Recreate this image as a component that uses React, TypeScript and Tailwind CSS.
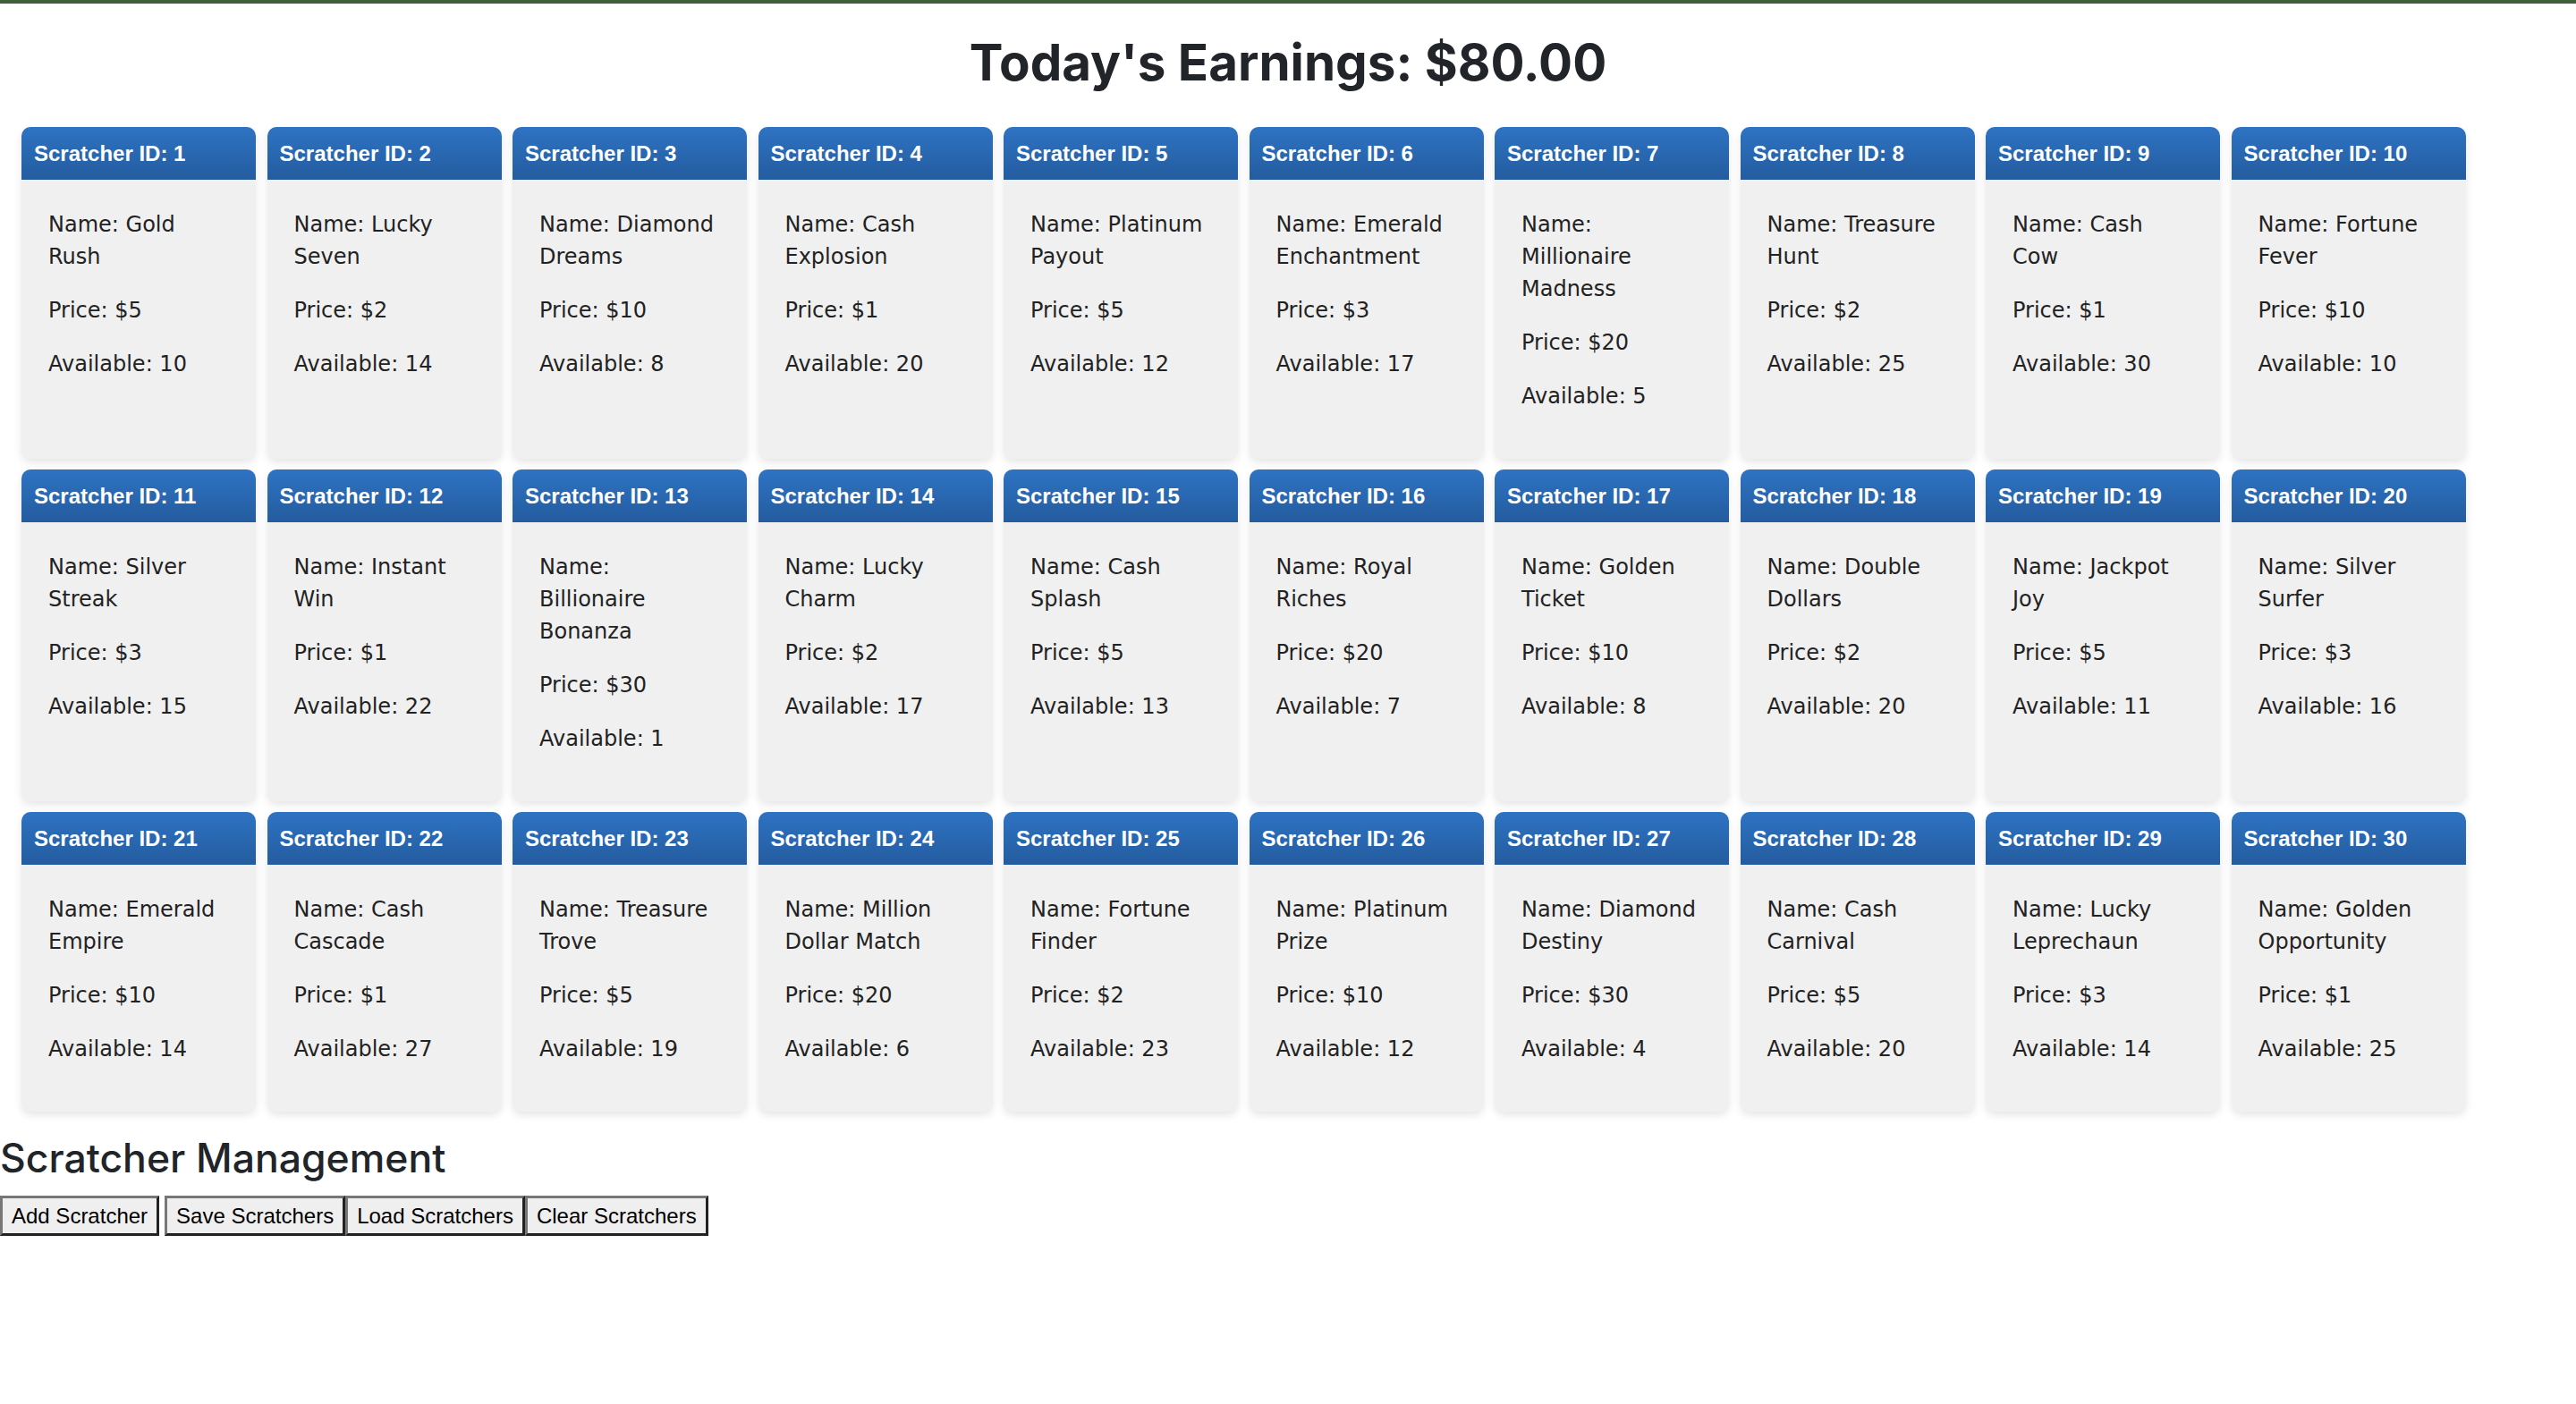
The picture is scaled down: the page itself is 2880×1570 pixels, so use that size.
const scratchers = [
  { id: 1, name: "Gold Rush", price: 5, available: 10 },
  { id: 2, name: "Lucky Seven", price: 2, available: 14 },
  { id: 3, name: "Diamond Dreams", price: 10, available: 8 },
  { id: 4, name: "Cash Explosion", price: 1, available: 20 },
  { id: 5, name: "Platinum Payout", price: 5, available: 12 },
  { id: 6, name: "Emerald Enchantment", price: 3, available: 17 },
  { id: 7, name: "Millionaire Madness", price: 20, available: 5 },
  { id: 8, name: "Treasure Hunt", price: 2, available: 25 },
  { id: 9, name: "Cash Cow", price: 1, available: 30 },
  { id: 10, name: "Fortune Fever", price: 10, available: 10 },
  { id: 11, name: "Silver Streak", price: 3, available: 15 },
  { id: 12, name: "Instant Win", price: 1, available: 22 },
  { id: 13, name: "Billionaire Bonanza", price: 30, available: 1 },
  { id: 14, name: "Lucky Charm", price: 2, available: 17 },
  { id: 15, name: "Cash Splash", price: 5, available: 13 },
  { id: 16, name: "Royal Riches", price: 20, available: 7 },
  { id: 17, name: "Golden Ticket", price: 10, available: 8 },
  { id: 18, name: "Double Dollars", price: 2, available: 20 },
  { id: 19, name: "Jackpot Joy", price: 5, available: 11 },
  { id: 20, name: "Silver Surfer", price: 3, available: 16 },
  { id: 21, name: "Emerald Empire", price: 10, available: 14 },
  { id: 22, name: "Cash Cascade", price: 1, available: 27 },
  { id: 23, name: "Treasure Trove", price: 5, available: 19 },
  { id: 24, name: "Million Dollar Match", price: 20, available: 6 },
  { id: 25, name: "Fortune Finder", price: 2, available: 23 },
  { id: 26, name: "Platinum Prize", price: 10, available: 12 },
  { id: 27, name: "Diamond Destiny", price: 30, available: 4 },
  { id: 28, name: "Cash Carnival", price: 5, available: 20 },
  { id: 29, name: "Lucky Leprechaun", price: 3, available: 14 },
  { id: 30, name: "Golden Opportunity", price: 1, available: 25 },
];

function ScratcherCard({ s }: { s: (typeof scratchers)[number] }) {
  return (
    <div className="flex flex-col overflow-hidden rounded-[10px] bg-[#f0f0f0] shadow-[0_4px_10px_rgba(0,0,0,0.1)]">
      <div className="flex h-[59px] items-center bg-gradient-to-b from-[#2e73c3] to-[#245c9f] px-[14px] font-['Liberation_Sans',Arial,sans-serif] text-[24px] font-bold text-white">
        Scratcher ID: {s.id}
      </div>
      <div className="px-[30px] pt-[32px] pb-[28px] font-['DejaVu_Sans',Verdana,sans-serif] text-[24px] leading-[36px] text-[#222]">
        <p className="mb-6">Name: {s.name}</p>
        <p className="mb-6">Price: ${s.price}</p>
        <p className="mb-6">Available: {s.available}</p>
      </div>
    </div>
  );
}

const btn =
  "border-[3px] border-t-[#777] border-l-[#777] border-r-[#222] border-b-[#222] bg-[#efefef] px-[10px] py-[5.5px] font-['Liberation_Sans',Arial,sans-serif] text-[24px] leading-[27.6px] text-black";

export default function App() {
  return (
    <div className="min-h-screen bg-white text-[#212529]">
      <div className="h-[4px] bg-[#3e5f38]" />
      <h1 className="mt-[30px] mb-[36px] text-center font-['Inter',sans-serif] text-[56.5px] font-bold leading-[72px]">
        Today's Earnings: ${"80.00"}
      </h1>

      <div className="ml-[24px] grid grid-cols-[repeat(10,262px)] gap-x-[12.5px] gap-y-[12px]">
        {scratchers.map((s) => (
          <ScratcherCard key={s.id} s={s} />
        ))}
      </div>

      <h2 className="mt-[24px] mb-[14px] font-['Inter',sans-serif] text-[44.5px] font-medium leading-[56px]">
        Scratcher Management
      </h2>
      <div className="flex items-start">
        <button className={btn}>Add Scratcher</button>
        <button className={btn + " ml-[6px]"}>Save Scratchers</button>
        <button className={btn}>Load Scratchers</button>
        <button className={btn}>Clear Scratchers</button>
      </div>
    </div>
  );
}
